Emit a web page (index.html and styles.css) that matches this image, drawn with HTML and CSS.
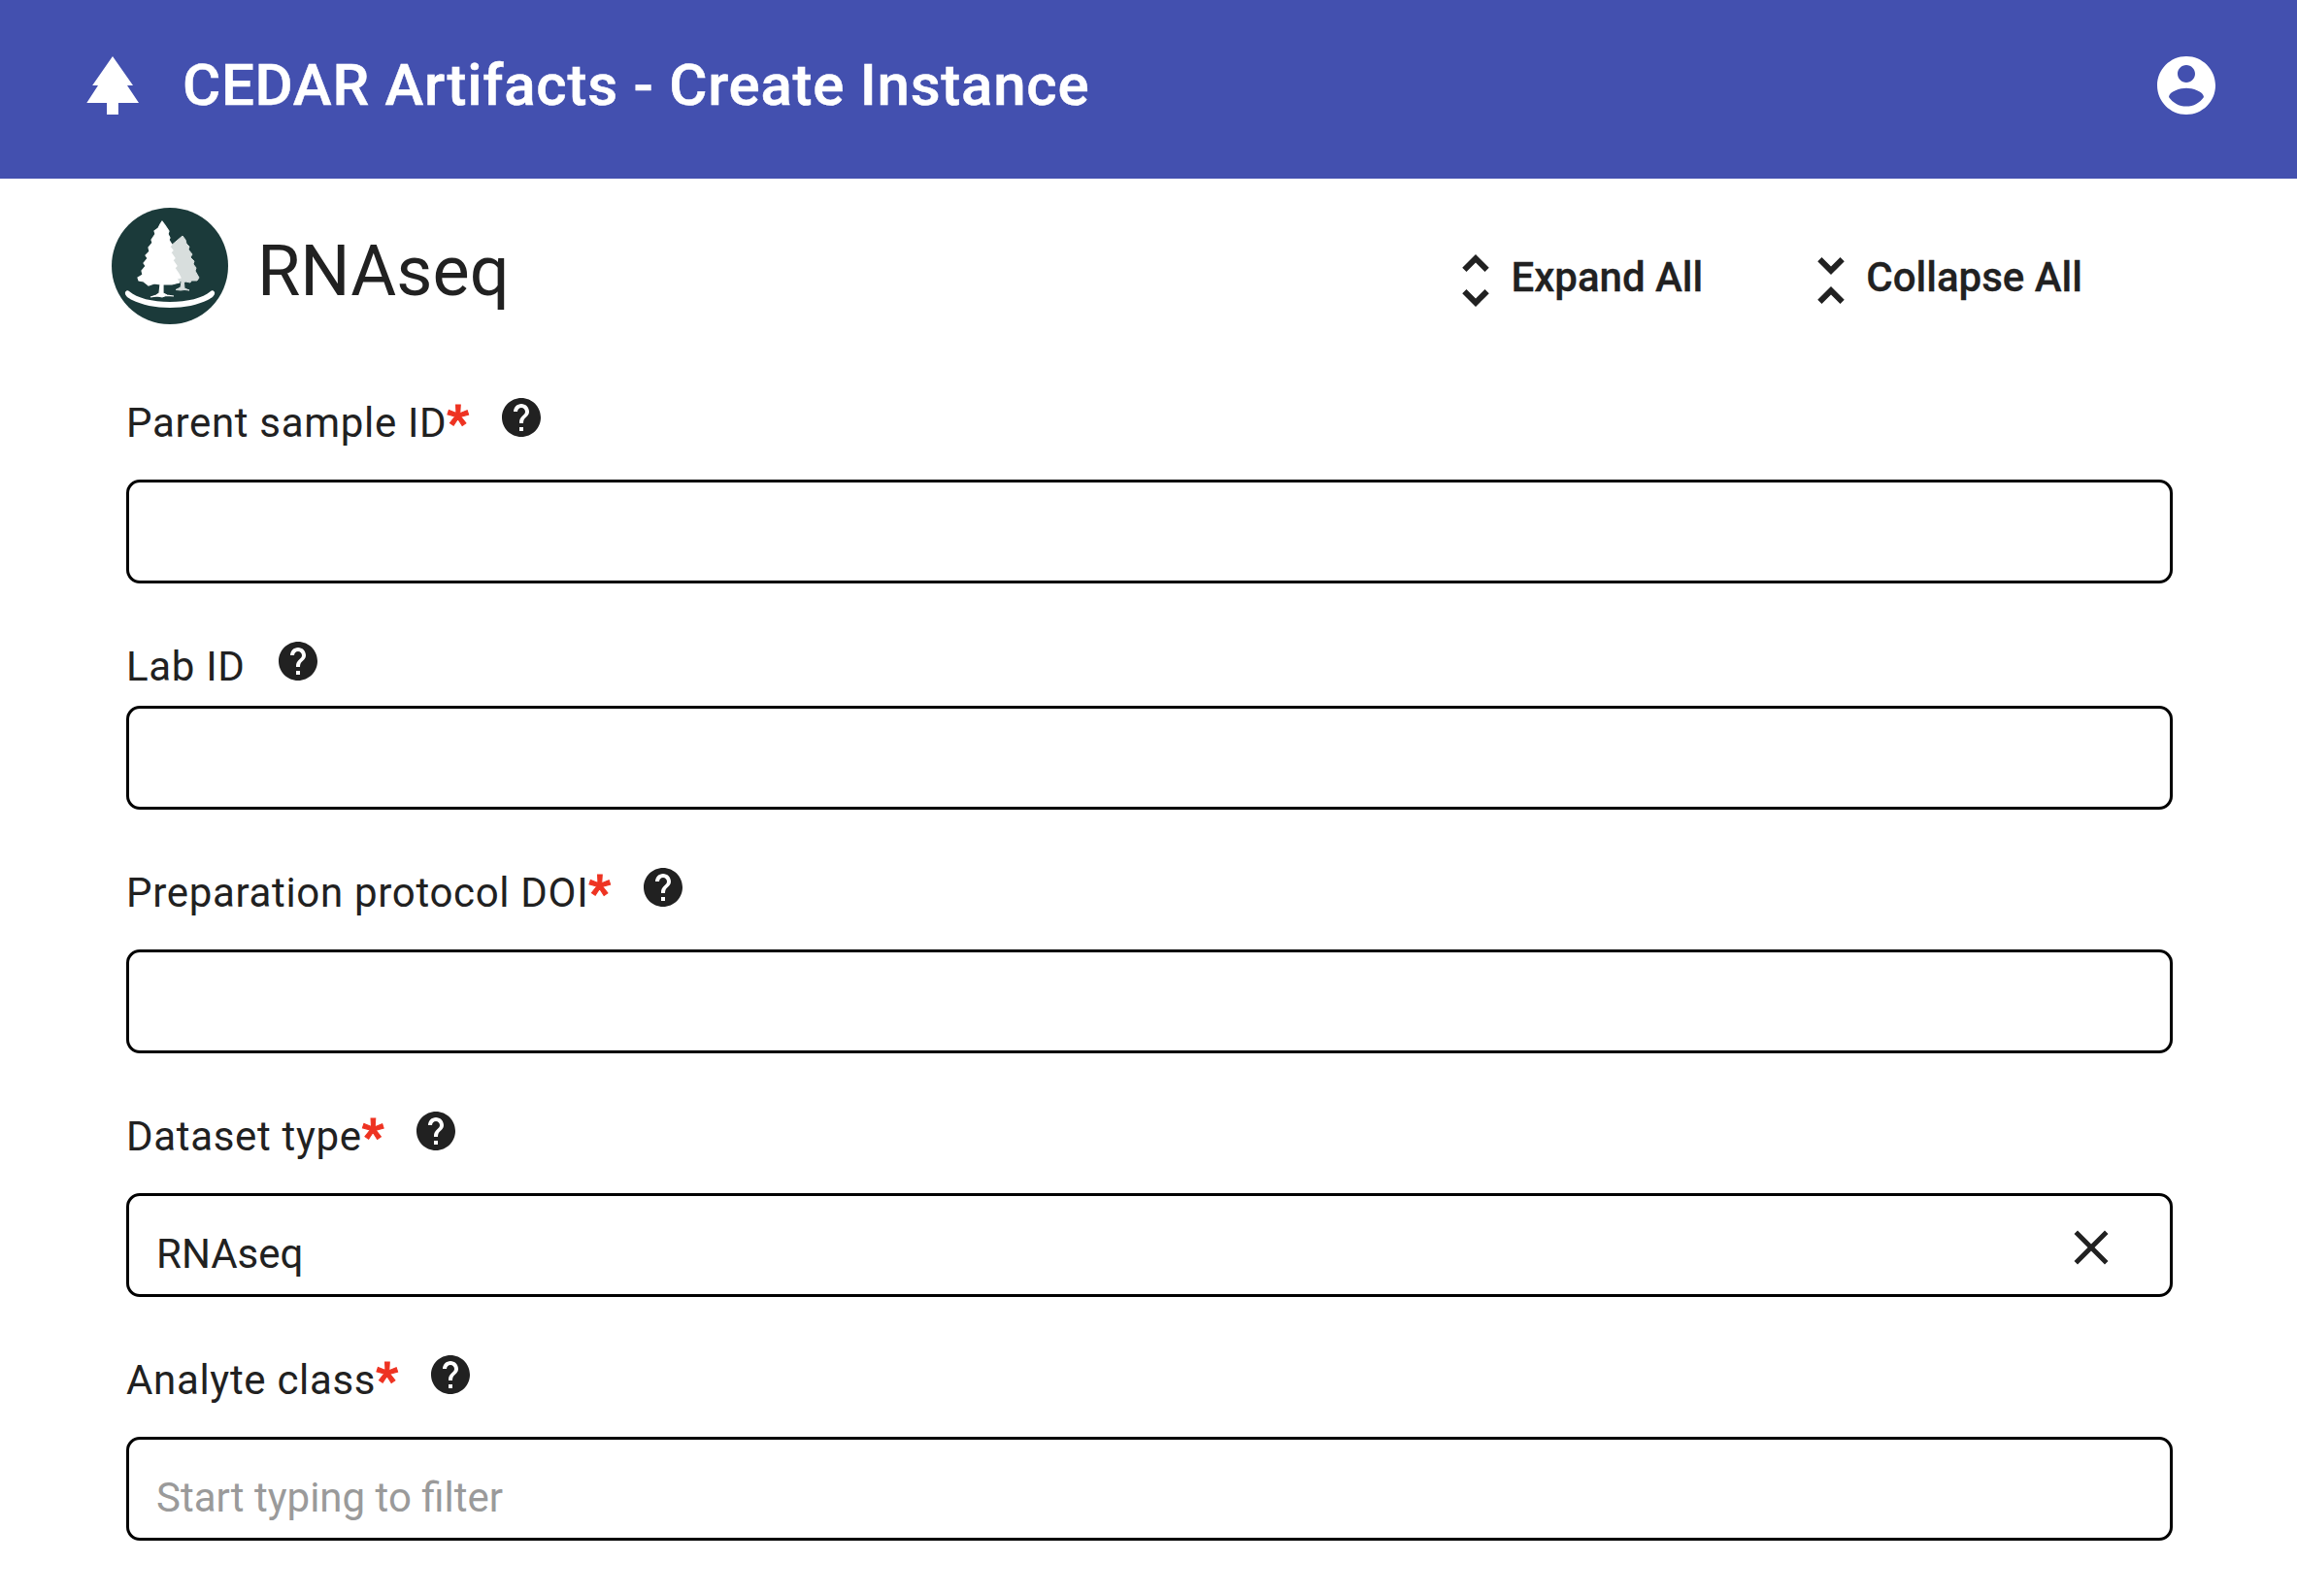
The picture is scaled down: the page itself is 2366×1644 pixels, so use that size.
FILE: index.html
```html
<!DOCTYPE html>
<html lang="en">
<head>
  <meta charset="UTF-8" />
  <meta name="viewport" content="width=device-width, initial-scale=1.0"/>
  <title>CEDAR Artifacts - Create Instance</title>
  <link rel="stylesheet" href="styles.css">
</head>
<body>

  <header class="topbar">
    <svg class="topbar-icon" viewBox="0 0 24 24"><path d="M17 12h2L12 2 5.05 12H7l-3.9 6h6.92v4h3.95v-4H21z"/></svg>
    <h1 class="topbar-title">CEDAR Artifacts - Create Instance</h1>
    <svg class="topbar-icon topbar-account" viewBox="0 0 24 24"><path d="M12 2C6.48 2 2 6.48 2 12s4.48 10 10 10 10-4.48 10-10S17.52 2 12 2zm0 3c1.66 0 3 1.34 3 3s-1.34 3-3 3-3-1.34-3-3 1.34-3 3-3zm0 14.2c-2.5 0-4.71-1.28-6-3.22.03-1.99 4-3.08 6-3.08 1.99 0 5.97 1.09 6 3.08-1.29 1.94-3.5 3.22-6 3.22z"/></svg>
  </header>

  <main class="page">
    <div class="template-head">
      <svg class="template-logo" viewBox="0 0 120 120">
        <circle cx="60" cy="60" r="60" fill="#1b3a3a"/>
        <g class="logo-trees">
          <path class="tree-back" d="M73 29L76 33 77 37 80 40 79 43 83 48 81 51 85 55 84 58 87 62 86 65 90 72 88 75 82 75 81 77 76 76 74.5 77 75 83 80 85 75 84.5 71 85 66 84.5 71 82 72 76 66 74 60 40z"/>
          <path class="tree-front" d="M52 14L55 18 57 21 59 24 58 27 60 31 59 33 62 38 60 40 63 44 61 46 65 52 63 54 67 60 65 62 69 68 71 72 67 73 70 77 62 79 56 79 53 79 53 88 57 90 64 91 56 90.5 52 92 47 91 40 92 46 90 49 88 50 79 44 78 38 80 33 76 28 75 27 72 32 69 31 65 35 60 33 57 37 52 35 49 39 45 38 41 42 36 41 33 45 27 44 24 48 21 50 17z"/>
          <path fill="#fff" d="M14 87c1-2 3-2 4-1 8 7 24 11 42 11s34-4 42-11c1-1 3-1 4 1 1 3-3 6-7 8-10 5-24 8-39 8s-29-3-39-8c-4-2-8-5-7-8z"/>
        </g>
      </svg>
      <h2 class="template-name">RNAseq</h2>
      <div class="template-actions">
        <button class="action" type="button">
          <svg class="action-icon" viewBox="0 0 24 24"><path d="M12 5.83L15.17 9l1.41-1.41L12 3 7.41 7.59 8.83 9 12 5.83zm0 12.34L8.83 15l-1.42 1.41L12 21l4.59-4.59L15.17 15 12 18.17z"/></svg>
          <span class="action-text">Expand All</span>
        </button>
        <button class="action" type="button">
          <svg class="action-icon" viewBox="0 0 24 24"><path d="M7.41 18.59L8.83 20 12 16.83 15.17 20l1.41-1.41L12 14l-4.59 4.59zm9.18-13.18L15.17 4 12 7.17 8.83 4 7.41 5.41 12 10l4.59-4.59z"/></svg>
          <span class="action-text">Collapse All</span>
        </button>
      </div>
    </div>

    <form class="fields">
      <div class="field field-required">
        <div class="field-label">
          <label for="parentSample">Parent sample ID<span class="star">*</span></label>
          <svg class="help" viewBox="0 0 24 24"><path d="M12 2C6.48 2 2 6.48 2 12s4.48 10 10 10 10-4.48 10-10S17.52 2 12 2zm1 17h-2v-2h2v2zm2.07-7.75l-.9.92C13.45 12.9 13 13.5 13 15h-2v-.5c0-1.1.45-2.1 1.17-2.83l1.24-1.26c.37-.36.59-.86.59-1.41 0-1.1-.9-2-2-2s-2 .9-2 2H8c0-2.21 1.79-4 4-4s4 1.79 4 4c0 .88-.36 1.68-.93 2.25z"/></svg>
        </div>
        <div class="input-wrap"><input id="parentSample" type="text" /></div>
      </div>

      <div class="field">
        <div class="field-label">
          <label for="labId">Lab ID</label>
          <svg class="help" viewBox="0 0 24 24"><path d="M12 2C6.48 2 2 6.48 2 12s4.48 10 10 10 10-4.48 10-10S17.52 2 12 2zm1 17h-2v-2h2v2zm2.07-7.75l-.9.92C13.45 12.9 13 13.5 13 15h-2v-.5c0-1.1.45-2.1 1.17-2.83l1.24-1.26c.37-.36.59-.86.59-1.41 0-1.1-.9-2-2-2s-2 .9-2 2H8c0-2.21 1.79-4 4-4s4 1.79 4 4c0 .88-.36 1.68-.93 2.25z"/></svg>
        </div>
        <div class="input-wrap"><input id="labId" type="text" /></div>
      </div>

      <div class="field field-required">
        <div class="field-label">
          <label for="protocolDoi">Preparation protocol DOI<span class="star">*</span></label>
          <svg class="help" viewBox="0 0 24 24"><path d="M12 2C6.48 2 2 6.48 2 12s4.48 10 10 10 10-4.48 10-10S17.52 2 12 2zm1 17h-2v-2h2v2zm2.07-7.75l-.9.92C13.45 12.9 13 13.5 13 15h-2v-.5c0-1.1.45-2.1 1.17-2.83l1.24-1.26c.37-.36.59-.86.59-1.41 0-1.1-.9-2-2-2s-2 .9-2 2H8c0-2.21 1.79-4 4-4s4 1.79 4 4c0 .88-.36 1.68-.93 2.25z"/></svg>
        </div>
        <div class="input-wrap"><input id="protocolDoi" type="text" /></div>
      </div>

      <div class="field field-required">
        <div class="field-label">
          <label for="datasetType">Dataset type<span class="star">*</span></label>
          <svg class="help" viewBox="0 0 24 24"><path d="M12 2C6.48 2 2 6.48 2 12s4.48 10 10 10 10-4.48 10-10S17.52 2 12 2zm1 17h-2v-2h2v2zm2.07-7.75l-.9.92C13.45 12.9 13 13.5 13 15h-2v-.5c0-1.1.45-2.1 1.17-2.83l1.24-1.26c.37-.36.59-.86.59-1.41 0-1.1-.9-2-2-2s-2 .9-2 2H8c0-2.21 1.79-4 4-4s4 1.79 4 4c0 .88-.36 1.68-.93 2.25z"/></svg>
        </div>
        <div class="input-wrap">
          <input id="datasetType" type="text" value="RNAseq" />
          <svg class="clear" viewBox="0 0 24 24"><path d="M19 6.41L17.59 5 12 10.59 6.41 5 5 6.41 10.59 12 5 17.59 6.41 19 12 13.41 17.59 19 19 17.59 13.41 12z"/></svg>
        </div>
      </div>

      <div class="field field-required">
        <div class="field-label">
          <label for="analyteClass">Analyte class<span class="star">*</span></label>
          <svg class="help" viewBox="0 0 24 24"><path d="M12 2C6.48 2 2 6.48 2 12s4.48 10 10 10 10-4.48 10-10S17.52 2 12 2zm1 17h-2v-2h2v2zm2.07-7.75l-.9.92C13.45 12.9 13 13.5 13 15h-2v-.5c0-1.1.45-2.1 1.17-2.83l1.24-1.26c.37-.36.59-.86.59-1.41 0-1.1-.9-2-2-2s-2 .9-2 2H8c0-2.21 1.79-4 4-4s4 1.79 4 4c0 .88-.36 1.68-.93 2.25z"/></svg>
        </div>
        <div class="input-wrap"><input id="analyteClass" type="text" placeholder="Start typing to filter" /></div>
      </div>
    </form>
  </main>

</body>
</html>
```

FILE: styles.css
```css
html, body {
  height: 100%;
}

body {
  margin: 0;
  font-family: Roboto, "Liberation Sans", sans-serif;
  color: #212121;
  background-color: #fff;
  overflow: hidden;
}

.topbar {
  display: flex;
  align-items: center;
  box-sizing: border-box;
  height: 184px;
  padding: 0 78px 8px 80px;
  background-color: #4350af;
  color: #fff;
}

.topbar-icon {
  width: 72px;
  height: 72px;
  fill: #fff;
  flex: none;
}

.topbar-title {
  margin: 0 0 0 36px;
  font-size: 60px;
  font-weight: 500;
  line-height: 72px;
  letter-spacing: 0.75px;
  -webkit-text-stroke: 0.5px #fff;
}

.topbar-account {
  margin-left: auto;
}

.page {
  padding: 30px 128px 0 115px;
}

.template-head {
  display: flex;
  align-items: flex-start;
}

.template-logo {
  width: 120px;
  height: 120px;
  flex: none;
}

.logo-trees {
  filter: blur(0.5px);
}

.tree-front {
  fill: #fff;
  stroke: #fff;
  stroke-width: 1.2;
}

.tree-back {
  fill: #d8dedd;
  stroke: #d8dedd;
  stroke-width: 1;
}

.template-name {
  margin: 24px 0 0 30px;
  font-size: 72px;
  font-weight: 400;
  line-height: 84px;
}

.template-actions {
  display: flex;
  margin: 39px 93px 0 auto;
  gap: 96px;
}

.action {
  display: flex;
  align-items: center;
  padding: 0;
  border: 0;
  background: none;
  color: #212121;
  font-family: inherit;
  font-size: 42px;
  font-weight: 500;
  cursor: pointer;
}

.action-icon {
  width: 72px;
  height: 72px;
  fill: #212121;
  flex: none;
}

.action-text {
  margin-bottom: 7px;
  -webkit-text-stroke: 0.3px #212121;
}

.fields {
  margin: 76px 0 0 15px;
}

.field {
  margin-bottom: 60px;
}

.field-label {
  display: flex;
  align-items: flex-start;
  height: 48px;
  margin-bottom: 18px;
  font-size: 42px;
  line-height: 48px;
}

.field-label label {
  padding-top: 2px;
  letter-spacing: 0.68px;
  white-space: nowrap;
}

.field-required .field-label {
  margin-bottom: 36px;
}

.star {
  margin-right: -1px;
  color: #ee3322;
  font-size: 50px;
  font-weight: 700;
  line-height: 0;
  vertical-align: -3px;
  -webkit-text-stroke: 1px #ee3322;
}

.help {
  width: 48px;
  height: 48px;
  margin: -4px 0 0 30px;
  fill: #212121;
  flex: none;
}

.input-wrap {
  position: relative;
}

.input-wrap input {
  display: block;
  box-sizing: border-box;
  width: 100%;
  height: 107px;
  padding: 18px 28px 0;
  border: 3px solid #000;
  border-radius: 14px;
  outline: none;
  background: #fff;
  color: #212121;
  font-family: inherit;
  font-size: 42px;
}

.input-wrap input::placeholder {
  color: #9a9a9a;
  opacity: 1;
}

.clear {
  position: absolute;
  top: 26px;
  right: 54px;
  width: 60px;
  height: 60px;
  fill: #212121;
}
```
